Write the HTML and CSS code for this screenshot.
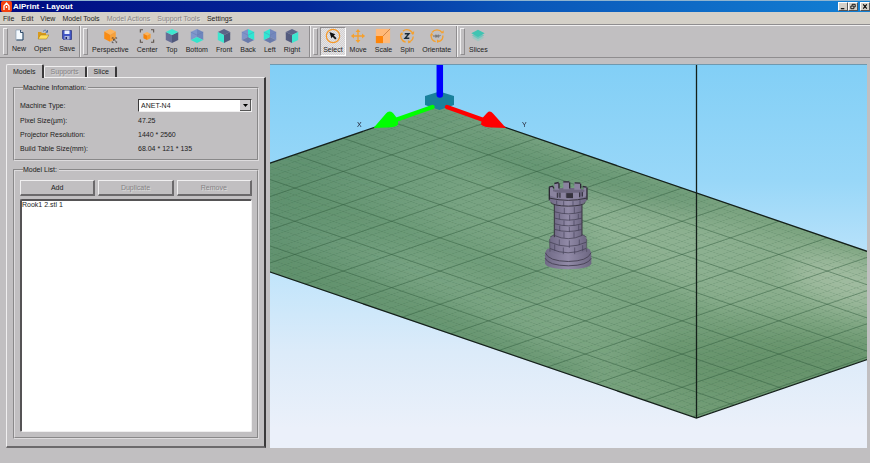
FILE: index.html
```
<!DOCTYPE html>
<html lang="en">
<head>
    <title>AlPrint - Layout</title>
    <meta charset="utf-8">
    <meta name="viewport" content="width=device-width, initial-scale=1">
    <link rel="stylesheet" href="styles.css">
</head>
<body>
    <header class="titlebar">
        <svg class="app-icon" viewBox="0 0 11 11" aria-hidden="true">
            <rect width="11" height="11" rx="2" fill="#f4400e"/>
            <path d="M3 9V5L5.500 2 8 5V9M5.500 5V7" fill="none" stroke="#fff" stroke-width="1.300"/>
        </svg>
        <h1>AlPrint - Layout</h1>
        <div class="window-buttons">
            <button type="button" aria-label="Minimize"><svg viewBox="0 0 9 8"><path d="M2 6.500H6" stroke="#000" stroke-width="1.300"/></svg></button>
            <button type="button" aria-label="Restore"><svg viewBox="0 0 9 8"><path d="M3.500 3V1.500H7V4.500H6M2 3.500H5.500V6.500H2Z" fill="none" stroke="#000"/></svg></button>
            <button type="button" class="close" aria-label="Close"><svg viewBox="0 0 9 8"><path d="M2.500 1.500 6.500 6.500M6.500 1.500 2.500 6.500" stroke="#000" stroke-width="1.300"/></svg></button>
        </div>
    </header>

    <nav class="menubar">
        <button type="button">File</button>
        <button type="button">Edit</button>
        <button type="button">View</button>
        <button type="button">Model Tools</button>
        <button type="button" disabled>Model Actions</button>
        <button type="button" disabled>Support Tools</button>
        <button type="button">Settings</button>
    </nav>

    <div class="toolbars">
        <div class="toolbar toolbar-file">
            <button type="button">
                <svg viewBox="0 0 12 12"><path d="M3 1H7.500L10 3.500V11H3Z" fill="#f4faff" stroke="#7d93ad" stroke-width=".6"/><path d="M7.500 1V3.500H10V11H3.500" fill="none" stroke="#2f4a68"/></svg>
                New
            </button>
            <button type="button">
                <svg viewBox="0 0 12 12"><path d="M1 10V3H4L5 4H9V10Z" fill="#d99a1c"/><path d="M1 10 3.500 6H12L9.500 10Z" fill="#ffdf60" stroke="#9a7416" stroke-width=".5"/><path d="M6 2.500C8 .5 9 1 10 3M10.500 1V3.300H8.500" fill="none" stroke="#35609c" stroke-width=".8"/></svg>
                Open
            </button>
            <button type="button">
                <svg viewBox="0 0 12 12"><path d="M1.500 1.500H10.500V10.500H2.500L1.500 9.500Z" fill="#4155c4" stroke="#26307c" stroke-width=".7"/><path d="M3.500 1.500H8.500V5H3.500Z" fill="#e9f0ff"/><path d="M3.500 7H8.500V10.500H3.500Z" fill="#aab4dd"/><path d="M4.500 8H6V10H4.500Z" fill="#1c2560"/></svg>
                Save
            </button>
        </div>

        <div class="toolbar">
            <button type="button">
                <svg viewBox="0 0 18 18"><path d="M9 1 15.500 4 9 7.500 2.500 4Z" fill="#ffb45a"/><path d="M2.500 4 9 7.500V15.500L2.500 12Z" fill="#f98b12"/><path d="M15.500 4 9 7.500V15.500L15.500 12Z" fill="#f7a03a"/><path d="M11.500 12V11H13M15 11H16.500V12M11.500 15V16.500H13M15.500 16.500H16.500V15M13 12.500 16 15.500M13 12.500H15M13 12.500V14.500" fill="none" stroke="#4a4038" stroke-width=".9"/></svg>
                Perspective
            </button>
            <button type="button">
                <svg viewBox="0 0 18 18"><path d="M1.500 5V2H4.500M13.500 2H16.500V5M1.500 13V16H4.500M13.500 16H16.500V13" fill="none" stroke="#5b5048" stroke-width="1.200"/><path d="M9 4.500 13 6.500 9 8.500 5 6.500Z" fill="#ffb257"/><path d="M5 6.500 9 8.500V13.500L5 11.500Z" fill="#f58208"/><path d="M13 6.500 9 8.500V13.500L13 11.500Z" fill="#fa9a28"/></svg>
                Center
            </button>
            <button type="button">
                <svg viewBox="0 0 18 18"><path d="M2 4.500 9 8V17L2 13.500Z" fill="#666e96"/><path d="M16 4.500 9 8V17L16 13.500Z" fill="#50587c"/><path d="M9 1 16 4.500 9 8 2 4.500Z" fill="#3de6cf"/></svg>
                Top
            </button>
            <button type="button">
                <svg viewBox="0 0 18 18"><path d="M9 1 16 4.500V13.500L9 10Z" fill="#6f86bd"/><path d="M9 1 2 4.500V13.500L9 10Z" fill="#7f97cc"/><path d="M2 4.500 9 8 16 4.500" fill="none" stroke="#627ab0" stroke-width=".6"/><path d="M2 13.500 9 10 16 13.500 9 17Z" fill="#35e3cb"/></svg>
                Bottom
            </button>
            <button type="button">
                <svg viewBox="0 0 18 18"><path d="M9 1 16 4.500 9 8 2 4.500Z" fill="#5c6488"/><path d="M16 4.500 9 8V17L16 13.500Z" fill="#50587c"/><path d="M2 4.500 9 8V17L2 13.500Z" fill="#3de6cf"/></svg>
                Front
            </button>
            <button type="button">
                <svg viewBox="0 0 18 18"><path d="M9 1 2 4.500V13.500L9 10Z" fill="#7f93c8"/><path d="M2 13.500 9 10 16 13.500 9 17Z" fill="#6a7bab"/><path d="M9 1 16 4.500V13.500L9 10Z" fill="#2fe6d2"/><path d="M2 4.500 9 8 16 4.500M9 8V17" fill="none" stroke="#5f73a8" stroke-width=".4"/></svg>
                Back
            </button>
            <button type="button">
                <svg viewBox="0 0 18 18"><path d="M9 1 16 4.500V13.500L9 10Z" fill="#7387bd"/><path d="M2 13.500 9 10 16 13.500 9 17Z" fill="#6a7bab"/><path d="M9 1 2 4.500V13.500L9 10Z" fill="#2fe6d2"/><path d="M2 4.500 9 8 16 4.500M9 8V17" fill="none" stroke="#5f73a8" stroke-width=".4"/></svg>
                Left
            </button>
            <button type="button">
                <svg viewBox="0 0 18 18"><path d="M9 1 16 4.500 9 8 2 4.500Z" fill="#5c6488"/><path d="M2 4.500 9 8V17L2 13.500Z" fill="#525a7e"/><path d="M16 4.500 9 8V17L16 13.500Z" fill="#3de6cf"/></svg>
                Right
            </button>
        </div>

        <div class="toolbar toolbar-mode">
            <button type="button" class="checked" aria-pressed="true">
                <svg viewBox="0 0 18 18"><circle cx="9" cy="9" r="7.500" fill="none" stroke="#f5992a" stroke-width="1.400"/><path d="M5 4.500 11.500 7 9.800 8.300 13 11.500 11.500 13 8.500 9.800 7.200 11.500Z" fill="#111"/></svg>
                Select
            </button>
            <button type="button">
                <svg viewBox="0 0 18 18"><path d="M9 3V15M3 9H15" stroke="#f5a02e" stroke-width="1.500"/><path d="M9 1 11.800 4.500H6.200ZM9 17 11.800 13.500H6.200ZM1 9 4.500 6.200V11.800ZM17 9 13.500 6.200V11.800Z" fill="#f5a02e"/></svg>
                Move
            </button>
            <button type="button">
                <svg viewBox="0 0 18 18"><path d="M1 1H17V17H1Z" fill="#ffb978"/><path d="M1 9H9V17H1Z" fill="#ff8407"/><path d="M9 9 17 1" stroke="#c87a3a" stroke-width=".9"/></svg>
                Scale
            </button>
            <button type="button">
                <svg viewBox="0 0 18 18"><path d="M4.500 3.500A7 7 0 0 1 15.800 7.500M16 9.500A7 7 0 0 1 10 15.900M7.500 15.900A7 7 0 0 1 2.800 5.700" fill="none" stroke="#f5a02e" stroke-width="1.500"/><path d="M13.500 6.500H17V3.500ZM10.500 13.500V17.500L13.500 16ZM1 7.500 4.500 8 3.500 4.500Z" fill="#f5a02e"/><path d="M6.500 6.400H11.200L6.800 11.600H11.600" fill="none" stroke="#1c2c38" stroke-width="1.600"/></svg>
                Spin
            </button>
            <button type="button">
                <svg viewBox="0 0 18 18"><path d="M3.500 5A6.600 6.600 0 0 1 14.500 5M15.600 8.500A6.600 6.600 0 0 1 10.500 15.400M7.500 15.400A6.600 6.600 0 0 1 2.400 8" fill="none" stroke="#f5a02e" stroke-width="1.500"/><path d="M13 6H16.500V2.500ZM9 13V17L12.500 15ZM1 8.500H5L3 5Z" fill="#f5a02e"/><path d="M5.500 8V10.200M7 8H8.500V10.200H7ZM9.800 8H11.200V10.200H9.800ZM12.500 7.800V9" fill="none" stroke="#666" stroke-width=".9"/></svg>
                Orientate
            </button>
        </div>

        <div class="toolbar toolbar-slices">
            <button type="button">
                <svg viewBox="0 0 18 18"><path d="M9 8 16 11 9 15 2 11Z" fill="#8fc9c2" opacity=".7"/><path d="M9 5 16 8.500 9 12.500 2 8.500Z" fill="#62c6ba" opacity=".8"/><path d="M9 2 16.500 6 9 10 1.500 6Z" fill="#3fc4b2"/></svg>
                Slices
            </button>
        </div>
    </div>

    <main>
        <section class="side-panel">
            <div class="tabs" role="tablist">
                <button type="button" role="tab" class="tab active" aria-selected="true">Models</button>
                <button type="button" role="tab" class="tab" disabled>Supports</button>
                <button type="button" role="tab" class="tab">Slice</button>
            </div>
            <div class="tab-page">
                <fieldset class="machine">
                    <legend>Machine Infomation:</legend>
                    <div class="machine-grid">
                        <label for="machine-type">Machine Type:</label>
                        <select id="machine-type" class="combo">
                            <option>ANET-N4</option>
                        </select>
                        <span>Pixel Size(µm):</span>
                        <output>47.25</output>
                        <span>Projector Resolution:</span>
                        <output>1440 * 2560</output>
                        <span>Build Table Size(mm):</span>
                        <output>68.04 * 121 * 135</output>
                    </div>
                </fieldset>

                <fieldset class="models">
                    <legend>Model List:</legend>
                    <div class="model-buttons">
                        <button type="button">Add</button>
                        <button type="button" disabled>Duplicate</button>
                        <button type="button" disabled>Remove</button>
                    </div>
                    <select class="model-list" size="2" aria-label="Model List">
                        <option>Rook1 2.stl 1</option>
                    </select>
                </fieldset>
            </div>
        </section>

        <section class="viewport">
            <svg viewBox="270 64 597 384" preserveAspectRatio="xMidYMid slice" role="img" aria-label="Build table">
                <defs>
                    <linearGradient id="bed" gradientUnits="userSpaceOnUse" x1="350" y1="110" x2="740" y2="400">
                        <stop offset="0" stop-color="#629372"/>
                        <stop offset=".3" stop-color="#78a382"/>
                        <stop offset=".6" stop-color="#7ea785"/>
                        <stop offset="1" stop-color="#709b74"/>
                    </linearGradient>
                    <!-- one tile is 2 mm of the table -->
                    <pattern id="fine" width="2" height="2" patternUnits="userSpaceOnUse" patternTransform="matrix(4.840 1.660 -4.840 1.660 440 104.500)">
                        <path d="M0 0H2M0 0V2" stroke="#2f5a3c" stroke-width=".2" stroke-opacity=".35"/>
                    </pattern>
                    <filter id="soft" x="-30%" y="-50%" width="160%" height="200%">
                        <feGaussianBlur stdDeviation="12"/>
                    </filter>
                    <clipPath id="table">
                        <path d="M440 104.500 1025 305 696.400 417.500 111 217Z"/>
                    </clipPath>
                    <linearGradient id="stone" x1="0" x2="1">
                        <stop offset="0" stop-color="#6f6985"/>
                        <stop offset=".5" stop-color="#928ba8"/>
                        <stop offset="1" stop-color="#6c6681"/>
                    </linearGradient>
                </defs>

                <g clip-path="url(#table)">
                    <path d="M440 104.500 1025 305 696.400 417.500 111 217Z" fill="url(#bed)"/>
                    <g filter="url(#soft)">
                        <path d="M560 190 700 215 880 250V330L720 310 600 250Z" fill="#9dbb9e" opacity=".55"/>
                        <path d="M440 140 500 140 690 190 730 215 640 205 540 185Z" fill="#568a66" opacity=".6"/>
                        <path d="M270 175 400 215 560 275 520 290 400 245 270 210Z" fill="#5c8f69" opacity=".4"/>
                        <path d="M270 240 440 300 600 375 560 390 270 290Z" fill="#5c8c66" opacity=".6"/>
                        <path d="M670 335 867 345V380L700 390 620 360Z" fill="#5f8d65" opacity=".55"/>
                        <ellipse cx="860" cy="285" rx="75" ry="22" fill="#b2c6ae" opacity=".6" transform="rotate(14 860 285)"/>
                    </g>
                    <path d="M440 104.500 1025 305 696.400 417.500 111 217Z" fill="url(#fine)"/>
                    <!-- 10 mm grid: 12 x 6 lines -->
                    <g transform="matrix(48.400 16.600 -48.400 16.600 440 104.500)">
                        <path class="grid-line" d="M0 1H13M0 2H13M0 3H13M0 4H13M0 5H13M0 6H13M1 0V7M2 0V7M3 0V7M4 0V7M5 0V7M6 0V7M7 0V7M8 0V7M9 0V7M10 0V7M11 0V7M12 0V7"/>
                    </g>
                </g>
                <path class="table-edge" d="M440 104.500 1025 305 696.400 417.500 111 217Z"/>
                <path class="table-edge" d="M696.500 64V417.500"/>

                <path d="M425 95.500 439.500 91 454 95.500V104.500L439.500 109.500 425 104.500Z" fill="#1a819c"/>
                <path d="M439.800 60V94" stroke="#00f" stroke-width="6.500" stroke-linecap="round"/>
                <path d="M432.500 106.500 394 120" stroke="#0f0" stroke-width="4.500" stroke-linecap="round"/>
                <path d="M373.500 127.500 386 113Q389 109.500 393 112.500L398 119 398 124Q396 127 387 127Z" fill="#0f0"/>
                <path d="M447 106.500 485 120" stroke="red" stroke-width="4.500" stroke-linecap="round"/>
                <path d="M506 127.500 493 113Q490 109.500 487 112.500L482 118 481 124Q484 127 492 127Z" fill="red"/>
                <text x="357" y="126" class="axis">X</text>
                <text x="522" y="126" class="axis">Y</text>

                <!-- rook -->
                <g transform="translate(500 160) scale(.3333)">
                    <path d="M135 285Q135 266 148 263H262Q274 266 274 285V308Q272 325 205 326 138 325 135 308Z" fill="url(#stone)"/>
                    <path d="M136 277Q145 302 205 303 264 302 273 277M135 293Q145 315 205 316 264 315 274 293" fill="none" stroke="#4a4558" stroke-width="3"/>
                    <path d="M149 240Q149 228 164 222H247Q260 228 260 240L258 270Q240 286 204 286 168 284 150 270Z" fill="url(#stone)"/>
                    <path d="M163 130H246V225Q205 245 163 225Z" fill="url(#stone)"/>
                    <path d="M148 98H260V120Q250 137 205 138 158 137 148 120Z" fill="url(#stone)"/>
                    <path d="M155 88Q204 76 255 88L255 104Q204 118 152 104Z" fill="#6d6780"/>
                    <path d="M148 78H159V92L174 97V114L148 104ZM163 69 177 66V88H164ZM190 63H209V86H190ZM223 66 242 68V88H223ZM249 78 261 80V106L248 112V97L254 92ZM180 97H197V116H180ZM219 97H237V114L219 117Z" fill="#8a839f"/>
                    <path d="M147 80 158 77 162 84M163 69 176 66M190 64H208M224 67 241 68M248 78 260 80M209 66V84M177 68V84M242 70V84M148 80V118M261 82V118" fill="none" stroke="#2c2934" stroke-width="4"/>
                    <path d="M172 97V112M180 97V112M239 96V110M247 95V108" stroke="#2c2934" stroke-width="3"/>
                    <path d="M199 98H219V113H199Z" fill="#35323d"/>
                    <path d="M149 113Q205 126 260 113M152 126Q160 136 205 137 250 136 256 126M163 133V230M246 133V226" fill="none" stroke="#37333f" stroke-width="3"/>
                    <path d="M165 154Q205 166 245 154M165 173Q205 185 245 173M165 190Q205 202 245 190M165 207Q205 219 245 207M150 230 164 222M260 230 247 222M150 245Q205 270 259 245M163 225Q205 244 246 225M150 264Q205 290 258 264" fill="none" stroke="#3d394b" stroke-width="2"/>
                    <path d="M193 142V160M223 140V158M178 160V177M209 163V180M235 160V175M192 180V196M222 180V195M179 196V212M208 199V215M236 194V210M192 215V232M222 215V232M178 237V254M208 240V262M238 237V254M164 252V271M190 261V281M224 261V281M248 254V272M170 120V134M191 122V137M219 122V137M240 119V134" stroke="#46415a" stroke-width="2"/>
                    <path d="M149 235Q149 258 150 274M260 235V274" fill="none" stroke="#4a4558" stroke-width="2"/>
                </g>
            </svg>
        </section>
    </main>

    <footer class="statusbar"></footer>
</body>
</html>
```

FILE: styles.css
```
:root {
    --face: #c1bfc1;
    --menu: #d4d0c8;
    --light: #f0eff0;
    --shadow: #8f8d8f;
    --dark: #3a393a;
    --text: #1c1c1c;
    --disabled: #858385;
}

* {
    margin: 0;
    padding: 0;
    box-sizing: border-box;
}

body {
    display: flex;
    flex-direction: column;
    height: 100vh;
    overflow: hidden;
    font-family: "Liberation Sans", Arial, sans-serif;
    font-size: 7px;
    line-height: 10px;
    color: var(--text);
    background-color: var(--face);
}

button, select {
    font: inherit;
    color: inherit;
    background: none;
    border: none;
}

button:disabled {
    color: var(--disabled);
    text-shadow: 1px 1px 0 rgba(255, 255, 255, 0.4);
}

svg {
    display: block;
}

.titlebar {
    display: flex;
    align-items: center;
    height: 12px;
    border-top: 1px solid #8fb4cf;
    background: linear-gradient(90deg, #000a80, #03299a 35%, #0a56b8 60%, #1280d4);
}

.app-icon {
    width: 11px;
    height: 11px;
    margin: 0 1px;
}

.titlebar h1 {
    flex: 1;
    font-size: 8px;
    font-weight: bold;
    color: #fff;
}

.window-buttons {
    display: flex;
}

.window-buttons button {
    width: 10px;
    height: 9px;
    background-color: var(--menu);
    border: 1px solid;
    border-color: #fff #555 #555 #fff;
}

.window-buttons svg {
    width: 8px;
    height: 7px;
}

.window-buttons .close {
    margin-left: 2px;
}

.menubar {
    display: flex;
    gap: 7px;
    height: 13px;
    padding: 1px 3px 0;
    background-color: var(--menu);
    border-bottom: 1px solid var(--shadow);
}

.toolbars {
    display: flex;
    height: 33px;
    border-top: 1px solid var(--light);
    border-bottom: 1px solid var(--shadow);
}

.toolbar {
    display: flex;
    padding: 1px 5px 1px 3px;
    border-right: 1px solid var(--shadow);
    box-shadow: 1px 0 0 var(--light);
}

/* drag handle */
.toolbar::before {
    content: "";
    width: 3px;
    margin: 1px 0;
    border: 1px solid;
    border-color: var(--light) var(--shadow) var(--shadow) var(--light);
}

.toolbar button {
    display: flex;
    flex-direction: column;
    align-items: center;
    padding: 0 4px;
    border: 1px solid transparent;
    border-width: 1px 0;
}

.toolbar svg {
    width: 18px;
    height: 18px;
    margin: 0 -3px 1px;
}

.toolbar-file {
    padding-right: 0;
}

.toolbar-file svg {
    width: 12px;
    height: 12px;
    margin-top: 1px;
    margin-bottom: 3px;
}

.toolbar-mode {
    padding-right: 1px;
}

.toolbar-mode::before {
    margin-right: 2px;
}

.toolbar .checked {
    padding: 0 2px;
    border: 1px solid;
    border-color: var(--shadow) #fff #fff var(--shadow);
    background: repeating-conic-gradient(#e6e5e6 0 25%, #d2d0d2 0 50%) 0 0 / 2px 2px;
}

.toolbar-slices {
    border-right: none;
    box-shadow: none;
}

main {
    display: flex;
    flex: 1;
    min-height: 0;
    padding: 6px 3px 0 6px;
    gap: 4px;
}

.side-panel {
    display: flex;
    flex-direction: column;
    width: 260px;
}

.tabs {
    display: flex;
    align-items: flex-end;
    height: 13px;
}

.tab {
    height: 11px;
    padding: 0 6px;
    border: solid;
    border-width: 1px 2px 0 1px;
    border-color: var(--light) var(--dark) var(--light) var(--light);
    border-radius: 2px 2px 0 0;
}

.tab.active {
    height: 14px;
    margin-bottom: -1px;
    background-color: var(--face);
    z-index: 1;
}

.tab-page {
    display: flex;
    flex-direction: column;
    flex: 1;
    gap: 4px;
    padding: 5px 5px 7px 6px;
    border: solid;
    border-width: 1px 2px 2px 1px;
    border-color: var(--light) var(--dark) #6b696b var(--light);
}

fieldset {
    min-width: 0;
    border: 2px groove #dddbdd;
}

legend {
    margin-left: 3px;
    padding: 0 2px 0 0;
}

.machine {
    padding: 6px 5px 5px;
}

.machine-grid {
    display: grid;
    grid-template-columns: 118px 1fr;
    align-items: center;
    row-gap: 4px;
}

.combo {
    width: 114px;
    height: 13px;
    padding: 0 2px;
    appearance: none;
    border: 1px solid;
    border-color: var(--dark) var(--light) var(--light) var(--dark);
    background: #fff url("data:image/svg+xml,%3Csvg xmlns='http://www.w3.org/2000/svg' width='11' height='11'%3E%3Cpath d='M0 0H11V11H0Z' fill='%23555'/%3E%3Cpath d='M0 0H10V10H0Z' fill='%23ccc9cc'/%3E%3Cpath d='M3 4H8L5.500 7Z'/%3E%3C/svg%3E") no-repeat right center;
}

.models {
    display: flex;
    flex-direction: column;
    flex: 1;
    padding: 5px;
}

.model-buttons {
    display: grid;
    grid-template-columns: repeat(3, 1fr);
    gap: 3px;
    margin-bottom: 3px;
}

.model-buttons button {
    height: 16px;
    border: solid;
    border-width: 1px 2px 2px 1px;
    border-color: var(--light) #6b696b #6b696b var(--light);
}

.model-list {
    flex: 1;
    overflow: hidden;
    background-color: #fff;
    border: solid;
    border-width: 2px 1px 1px 2px;
    border-color: #555355 var(--light) var(--light) #555355;
    outline: none;
}

.model-list option {
    padding: 0;
}

.viewport {
    flex: 1;
    min-width: 0;
    border-top: 1px solid #6f98ae;
    background: linear-gradient(#82cff6, #98d7f8 30%, #c2e5fb 55%, #dcebf9 75%, #ebf0fa 95%);
}

.viewport svg {
    width: 100%;
    height: 100%;
}

.grid-line {
    fill: none;
    stroke: #2f5a3c;
    stroke-opacity: 0.4;
    stroke-width: 1px;
    vector-effect: non-scaling-stroke;
}

.table-edge {
    fill: none;
    stroke: #14201a;
    stroke-width: 1.3px;
}

.axis {
    font-size: 7px;
    fill: #223;
}

.statusbar {
    height: 15px;
}
```
